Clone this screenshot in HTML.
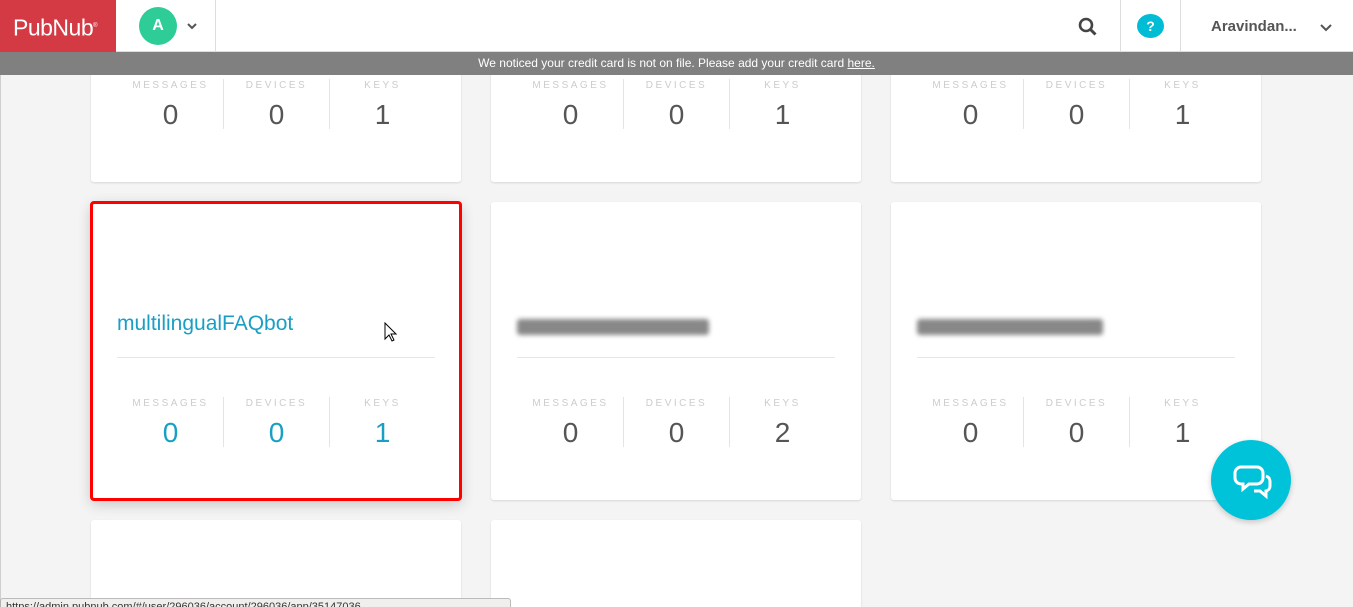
<!DOCTYPE html>
<html style="width:1353px;height:607px;overflow:hidden"><head><style>
*{box-sizing:border-box;margin:0;padding:0}
body{width:1353px;height:607px;overflow:hidden;background:#f4f4f4;font-family:"Liberation Sans",sans-serif;position:relative}
.hdr{position:absolute;left:0;top:0;width:1353px;height:52px;background:#fff;border-bottom:1px solid #ddd;z-index:10}
.logo{position:absolute;left:0;top:0;width:116px;height:52px;background:#d43a44;color:#fff;font-size:23px;line-height:52px;padding-left:13px;letter-spacing:-0.5px}
.av{position:absolute;left:139px;top:7px;width:38px;height:38px;border-radius:50%;background:#2ecc96;color:#fff;font-weight:bold;font-size:16px;text-align:center;line-height:38px}
.vl{position:absolute;top:0;width:1px;height:52px;background:#ddd}
.banner{position:absolute;left:0;top:52px;width:1353px;height:23px;background:#808080;color:#fff;font-size:12px;text-align:center;line-height:23px;z-index:10}
.card{position:absolute;width:370px;height:298px;background:#fff;border-radius:3px;box-shadow:0 1px 2px rgba(0,0,0,.12)}
.title{position:absolute;left:26px;top:110px;font-size:21px;color:#1a9fc4}
.blur{position:absolute;left:26px;top:117px;height:16px;background:#888;filter:blur(2.5px);border-radius:3px}
.div{position:absolute;left:26px;right:26px;top:155px;height:1px;background:#e6e6e6}
.st{position:absolute;top:195px;width:107px;height:50px;text-align:center}
.st .l{font-size:10px;letter-spacing:2.5px;color:#ccc;margin-top:1px}
.st .n{font-size:28px;color:#555;margin-top:8px}
.sep{position:absolute;top:195px;width:1px;height:50px;background:#e4e4e4}
.sel{outline:3px solid #f00;outline-offset:-2px;box-shadow:0 4px 14px rgba(0,0,0,.2)}
.sel .n{color:#1a9fc4}
</style></head><body>
<div class="hdr">
<div class="logo">PubNub<sup style="font-size:6px">®</sup></div>
<div class="av">A</div>
<svg style="position:absolute;left:187px;top:22px" width="10" height="8"><path d="M1 2l4 4 4-4" stroke="#555" stroke-width="2" fill="none"/></svg>
<div class="vl" style="left:215px"></div>
<svg style="position:absolute;left:1078px;top:17px" width="20" height="20"><circle cx="8" cy="8" r="6" stroke="#444" stroke-width="2.6" fill="none"/><path d="M12.5 12.5l5 5" stroke="#444" stroke-width="3"/></svg>
<div class="vl" style="left:1120px"></div>
<div style="position:absolute;left:1137px;top:14px;width:27px;height:24px;border-radius:50%;background:#00bcd4;color:#fff;font-weight:bold;font-size:14px;text-align:center;line-height:24px">?</div>
<div class="vl" style="left:1180px"></div>
<div style="position:absolute;left:1211px;top:18px;font-size:15px;color:#555;font-weight:bold">Aravindan...</div>
<svg style="position:absolute;left:1320px;top:24px" width="12" height="8"><path d="M1 1l5 5 5-5" stroke="#555" stroke-width="2" fill="none"/></svg>
</div>
<div class="banner">We noticed your credit card is not on file. Please add your credit card <u>here.</u></div>

<div class="card" style="left:91px;top:-116px"><div class="st" style="left:26px"><div class="l">MESSAGES</div><div class="n">0</div></div><div class="sep" style="left:132px"></div><div class="st" style="left:132px"><div class="l">DEVICES</div><div class="n">0</div></div><div class="sep" style="left:238px"></div><div class="st" style="left:238px"><div class="l">KEYS</div><div class="n">1</div></div></div>
<div class="card" style="left:491px;top:-116px"><div class="st" style="left:26px"><div class="l">MESSAGES</div><div class="n">0</div></div><div class="sep" style="left:132px"></div><div class="st" style="left:132px"><div class="l">DEVICES</div><div class="n">0</div></div><div class="sep" style="left:238px"></div><div class="st" style="left:238px"><div class="l">KEYS</div><div class="n">1</div></div></div>
<div class="card" style="left:891px;top:-116px"><div class="st" style="left:26px"><div class="l">MESSAGES</div><div class="n">0</div></div><div class="sep" style="left:132px"></div><div class="st" style="left:132px"><div class="l">DEVICES</div><div class="n">0</div></div><div class="sep" style="left:238px"></div><div class="st" style="left:238px"><div class="l">KEYS</div><div class="n">1</div></div></div>

<div class="card sel" style="left:91px;top:202px"><div class="title">multilingualFAQbot</div><div class="div"></div><div class="st" style="left:26px"><div class="l">MESSAGES</div><div class="n">0</div></div><div class="sep" style="left:132px"></div><div class="st" style="left:132px"><div class="l">DEVICES</div><div class="n">0</div></div><div class="sep" style="left:238px"></div><div class="st" style="left:238px"><div class="l">KEYS</div><div class="n">1</div></div>
<svg style="position:absolute;left:293px;top:120px" width="14" height="22"><path d="M1 1v16l4-4 3 6 2-1-3-6h5z" fill="#fff" stroke="#000"/></svg></div>
<div class="card" style="left:491px;top:202px"><div class="blur" style="width:192px"></div><div class="div"></div><div class="st" style="left:26px"><div class="l">MESSAGES</div><div class="n">0</div></div><div class="sep" style="left:132px"></div><div class="st" style="left:132px"><div class="l">DEVICES</div><div class="n">0</div></div><div class="sep" style="left:238px"></div><div class="st" style="left:238px"><div class="l">KEYS</div><div class="n">2</div></div></div>
<div class="card" style="left:891px;top:202px"><div class="blur" style="width:186px"></div><div class="div"></div><div class="st" style="left:26px"><div class="l">MESSAGES</div><div class="n">0</div></div><div class="sep" style="left:132px"></div><div class="st" style="left:132px"><div class="l">DEVICES</div><div class="n">0</div></div><div class="sep" style="left:238px"></div><div class="st" style="left:238px"><div class="l">KEYS</div><div class="n">1</div></div></div>

<div class="card" style="left:91px;top:520px;height:87px;border-radius:3px 3px 0 0"></div>
<div class="card" style="left:491px;top:520px;height:87px;border-radius:3px 3px 0 0"></div>

<div style="position:absolute;left:1211px;top:440px;width:80px;height:80px;border-radius:50%;background:#00c3d9;box-shadow:0 2px 6px rgba(0,0,0,.2);z-index:5">
<svg width="80" height="80"><path d="M30 27h16a6 6 0 0 1 6 6v5a6 6 0 0 1-6 6h-8l-6 5v-5h-2a6 6 0 0 1-6-6v-5a6 6 0 0 1 6-6z" fill="none" stroke="#fff" stroke-width="3"/><path d="M55 36a6 6 0 0 1 4 5v5a5 5 0 0 1-4 5v5l-6-5h-6" fill="none" stroke="#fff" stroke-width="3"/></svg></div>

<div style="position:absolute;left:0;top:598px;width:511px;height:9px;background:#f0efee;border:1px solid #bbb;border-bottom:none;border-radius:3px 3px 0 0;font-size:11px;color:#333;padding-left:5px;line-height:16px;overflow:hidden;z-index:20">https://admin.pubnub.com/#/user/296036/account/296036/app/35147036</div>
<div style="position:absolute;left:0;top:75px;width:1px;height:532px;background:#aaa;opacity:.5;z-index:20"></div>
</body></html>
